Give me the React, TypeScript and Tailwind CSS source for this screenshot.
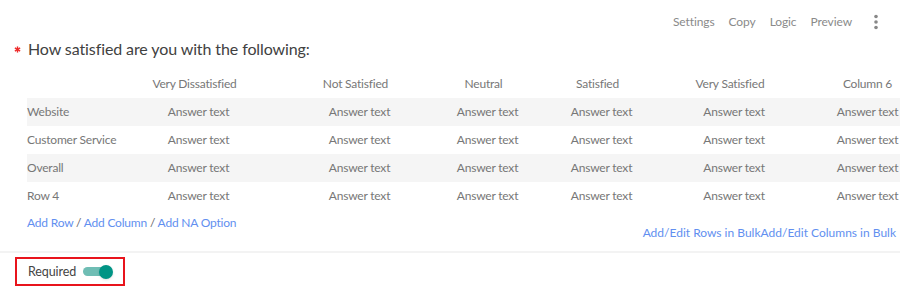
import React, { useState } from "react";

const COLUMNS = [
  "Very Dissatisfied",
  "Not Satisfied",
  "Neutral",
  "Satisfied",
  "Very Satisfied",
  "Column 6",
];
const ROWS = ["Website", "Customer Service", "Overall", "Row 4"];

// track widths picked so each column sits where the original table put it
const COL_W = ["w-[137px]", "w-[185px]", "w-[71px]", "w-[157px]", "w-[108px]", "w-[159px]"];
const HEAD_PAD = ["pr-2", "pr-2", "pr-2", "pr-2", "pr-2", ""];

const Kebab = () => (
  <svg width="4" height="16" viewBox="0 0 4 16" className="fill-[#888]">
    <circle cx="2" cy="2.5" r="1.8" />
    <circle cx="2" cy="8" r="1.8" />
    <circle cx="2" cy="13.5" r="1.8" />
  </svg>
);

const Asterisk = () => (
  <svg width="7" height="7" viewBox="0 0 8 8" className="stroke-[#ee2a2a]" strokeWidth="1.6">
    <line x1="4" y1="0.5" x2="4" y2="7.5" />
    <line x1="1" y1="2.2" x2="7" y2="5.8" />
    <line x1="1" y1="5.8" x2="7" y2="2.2" />
  </svg>
);

const Toggle: React.FC<{ on: boolean; onChange: () => void }> = ({ on, onChange }) => (
  <button
    type="button"
    onClick={onChange}
    className="relative flex items-center w-[30px] h-[14px]"
  >
    <span
      className={`block w-[28px] h-[9px] rounded-full ${on ? "bg-[#6fbdb4]" : "bg-gray-300"}`}
    />
    <span
      className={`absolute top-0 w-[14px] h-[14px] rounded-full shadow-sm ${
        on ? "left-[16px] bg-[#009485]" : "left-0 bg-gray-100"
      }`}
    />
  </button>
);

const App: React.FC = () => {
  const [required, setRequired] = useState(true);

  return (
    <div className="w-[900px] h-[295px] overflow-hidden bg-white font-['Lato',sans-serif] text-[12px] tracking-[-0.2px]">
      <div className="flex justify-end items-center gap-[14px] pt-[12px] pr-[22px] leading-[20px] text-[#8a8a8a] tracking-[-0.1px]">
        <span>Settings</span>
        <span>Copy</span>
        <span>Logic</span>
        <span>Preview</span>
        <span className="ml-[8px] flex items-center">
          <Kebab />
        </span>
      </div>

      <div className="flex items-center mt-[7px] pl-[14px] h-[20px]">
        <span className="w-[14px] flex mt-[1px]">
          <Asterisk />
        </span>
        <h2 className="text-[16px] leading-[20px] text-[#414141] tracking-[-0.1px]">
          How satisfied are you with the following:
        </h2>
      </div>

      <div className="ml-[27px] mt-[11px] w-[940px] text-[#777]">
        <div className="flex h-[28px] items-center">
          <div className="w-[103px] shrink-0" />
          {COLUMNS.map((c, i) => (
            <div key={c} className={`${COL_W[i]} ${HEAD_PAD[i]} shrink-0 flex justify-center whitespace-nowrap`}>
              {c}
            </div>
          ))}
        </div>
        {ROWS.map((r, ri) => (
          <div
            key={r}
            className={`flex h-[28px] items-center ${ri % 2 === 0 ? "bg-[#f5f5f5]" : "bg-white"}`}
          >
            <div className="w-[103px] shrink-0 whitespace-nowrap">{r}</div>
            {COLUMNS.map((c, i) => (
              <div key={c} className={`${COL_W[i]} shrink-0 flex justify-center whitespace-nowrap`}>
                Answer text
              </div>
            ))}
          </div>
        ))}
      </div>

      <div className="flex justify-between items-start h-[41px] pl-[27px] pr-[4px] text-[#628ff0]">
        <div className="mt-[3px] leading-[20px]">
          <a href="#" className="hover:underline">Add Row</a>
          <span className="text-[#666]"> / </span>
          <a href="#" className="hover:underline">Add Column</a>
          <span className="text-[#666]"> / </span>
          <a href="#" className="hover:underline">Add NA Option</a>
        </div>
        <div className="mt-[13px] leading-[20px] tracking-[0px]">
          <a href="#" className="hover:underline">Add/Edit Rows in Bulk</a>
          <a href="#" className="hover:underline">Add/Edit Columns in Bulk</a>
        </div>
      </div>

      <div className="h-[2px] bg-[#f3f3f3]" />

      <div className="mt-[4px] ml-[15px] w-[110px] h-[29px] border-2 border-[#e8141c] flex items-center pl-[11px] gap-[7px]">
        <span className="text-[#444] text-[12.5px] tracking-[-0.1px] translate-y-[1px]">Required</span>
        <Toggle on={required} onChange={() => setRequired((v) => !v)} />
      </div>
    </div>
  );
};

export default App;
